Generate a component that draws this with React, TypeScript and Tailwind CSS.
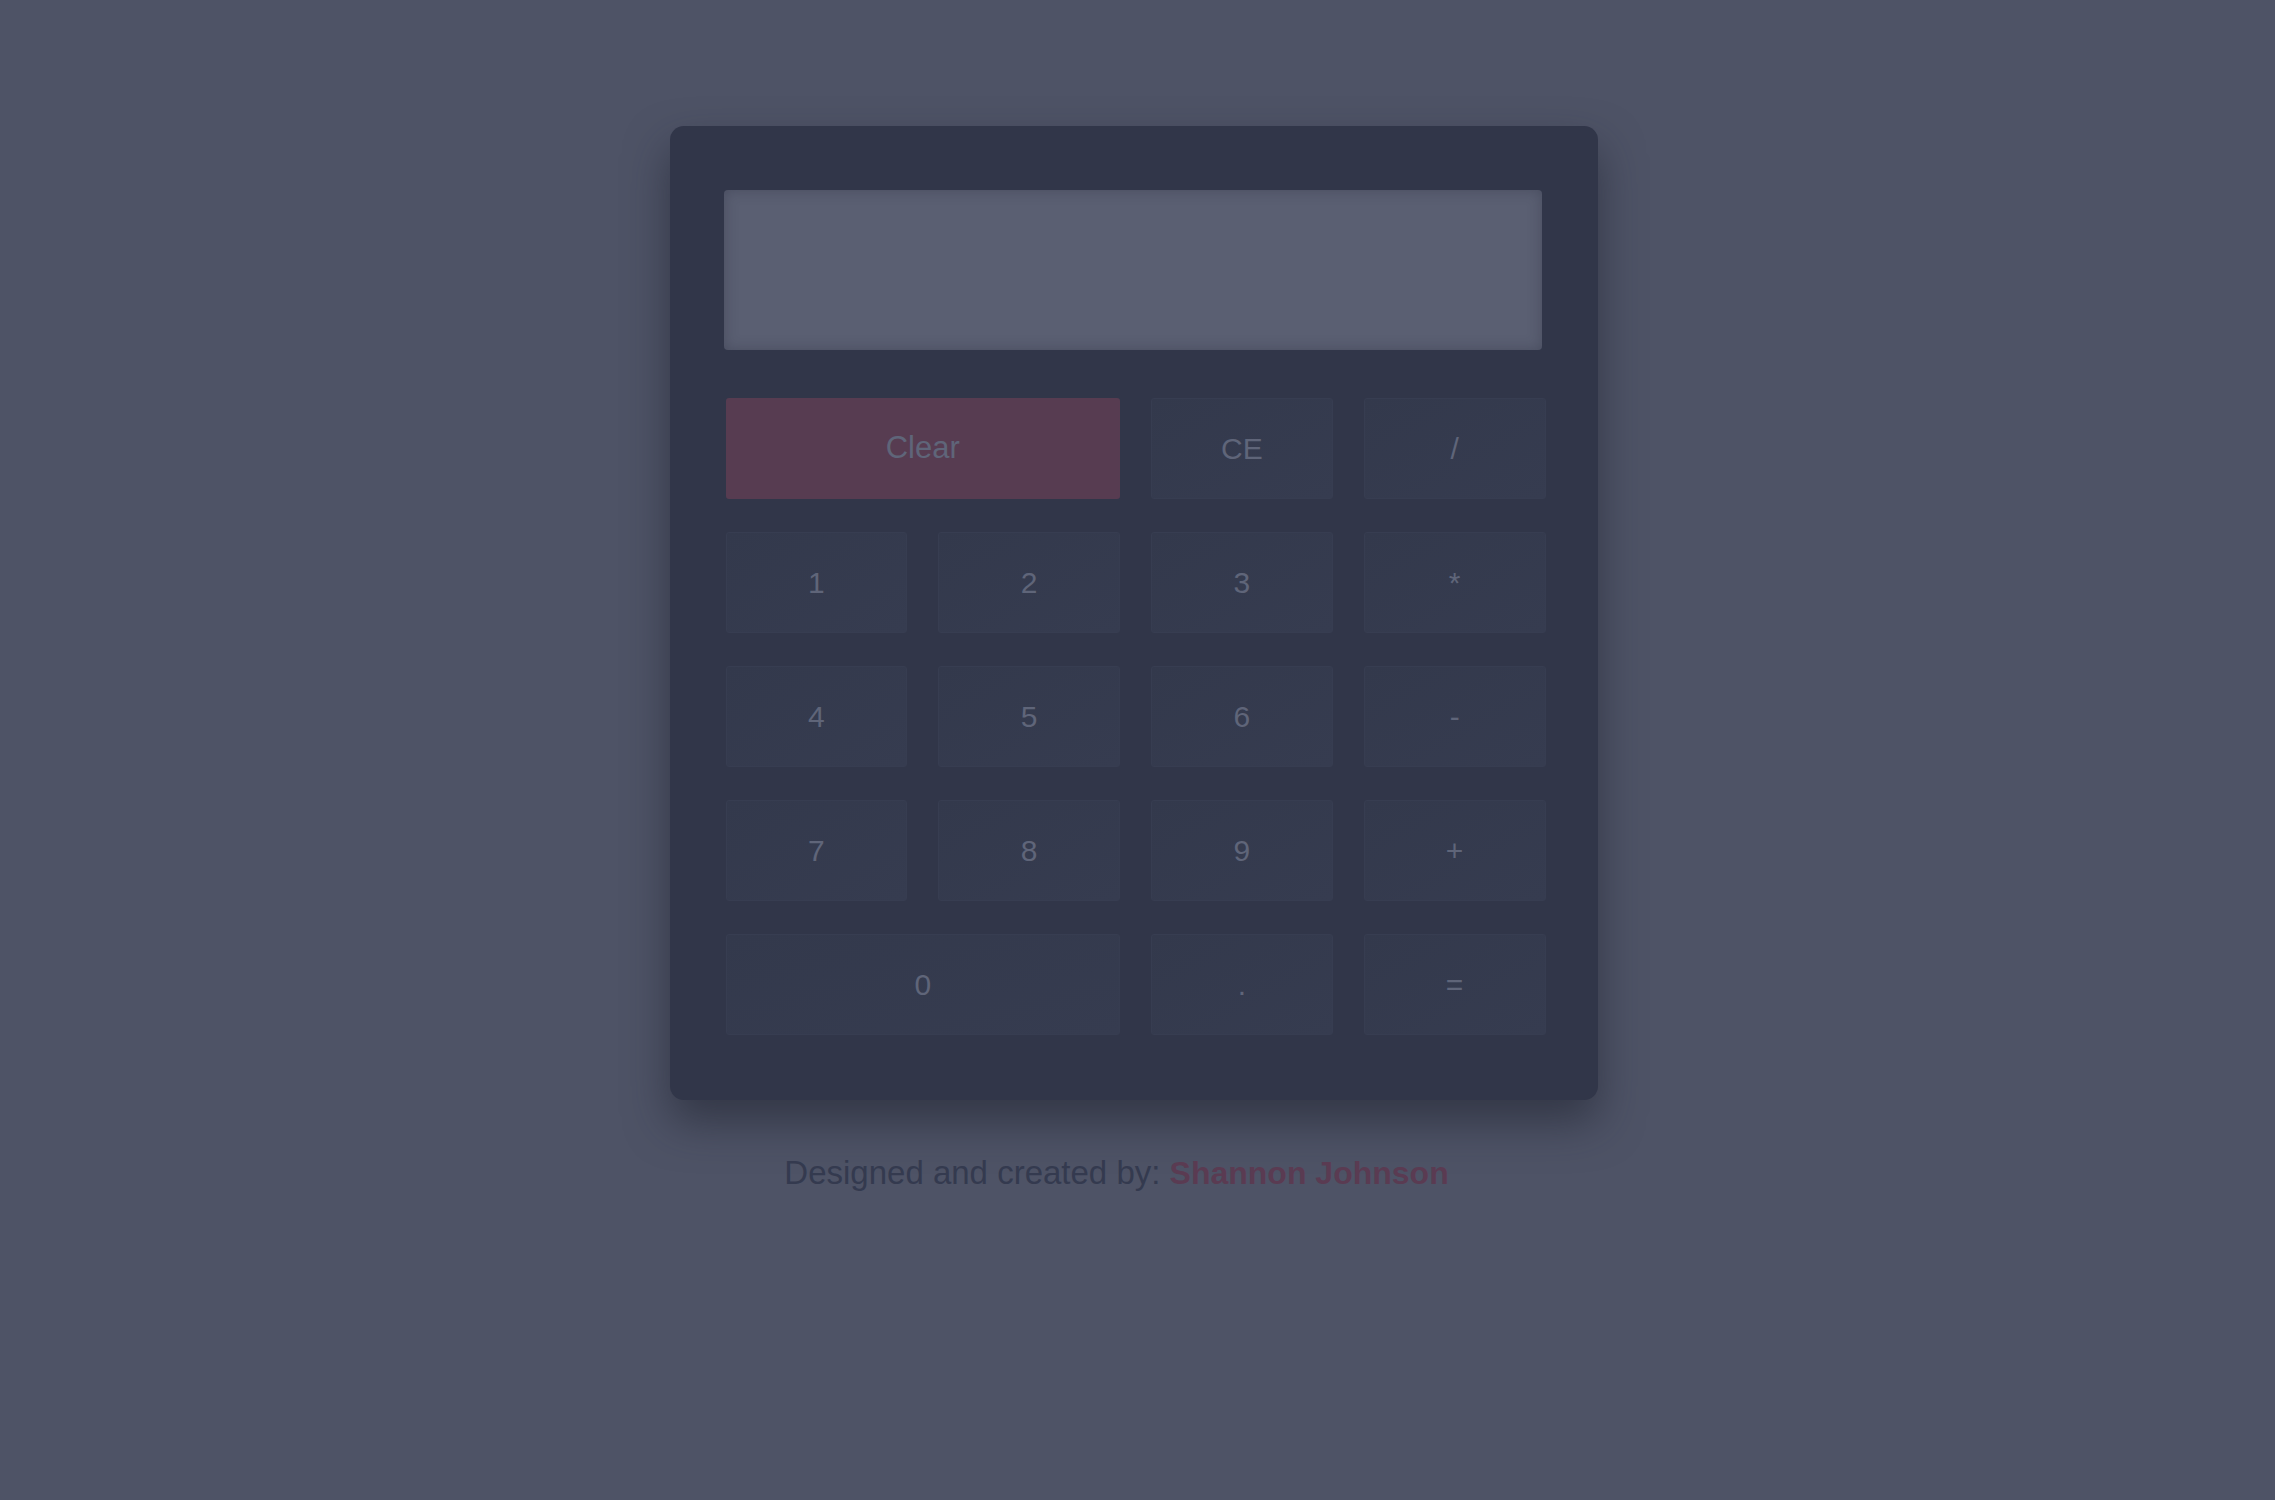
const keys = [
  { label: "1" },
  { label: "2" },
  { label: "3" },
  { label: "*" },
  { label: "4" },
  { label: "5" },
  { label: "6" },
  { label: "-" },
  { label: "7" },
  { label: "8" },
  { label: "9" },
  { label: "+" },
];

const Key = ({ label, className = "" }: { label: string; className?: string }) => {
  return (
    <button
      className={`h-[101px] rounded-[3px] border border-[#373d51] bg-gradient-to-br from-[#33394c] to-[#363c50] text-[30px] text-[#5f6579] ${className}`}
    >
      {label}
    </button>
  );
};

const App = () => {
  return (
    <div
      className="flex min-h-[1500px] w-full flex-col items-center bg-[#4e5366] pr-[8px] pt-[126px]"
      style={{ fontFamily: '"Liberation Sans", Arial, sans-serif' }}
    >
      <div className="w-[928px] rounded-[14px] bg-[#313649] pb-[65px] pl-[56px] pr-[52px] pt-[64px] shadow-[0_22px_44px_rgba(30,33,45,0.55)]">
        <div className="-ml-[2px] h-[160px] w-[818px] rounded-[4px] bg-[#5a5f72] shadow-[inset_0_0_14px_rgba(40,44,60,0.35)]" />

        <div className="mt-[48px] grid grid-cols-4 gap-x-[31px] gap-y-[33px]">
          <button className="col-span-2 h-[101px] rounded-[3px] bg-[#573c51] text-[31px] text-[#5f6579]">
            Clear
          </button>
          <Key label="CE" />
          <Key label="/" />
          {keys.map((k) => (
            <Key key={k.label} label={k.label} />
          ))}
          <Key label="0" className="col-span-2" />
          <Key label="." />
          <Key label="=" />
        </div>
      </div>

      <p className="mt-[48px] pr-[34px] text-center text-[33px] text-[#343a4f]">
        Designed and created by:{" "}
        <span className="text-[32px] font-bold text-[#5a3b52]">Shannon Johnson</span>
      </p>
    </div>
  );
};

export default App;
